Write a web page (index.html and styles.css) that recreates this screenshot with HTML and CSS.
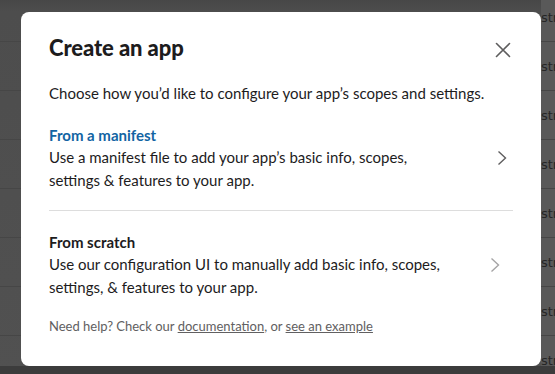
FILE: index.html
```html
<!DOCTYPE html>
<html>
<head>
<meta charset="utf-8">
<link rel="stylesheet" href="styles.css">
</head>
<body>
<div class="page">
  <div class="rows">
    <div class="row"><span class="cell">strings</span></div>
    <div class="row"><span class="cell">strings</span></div>
    <div class="row"><span class="cell">strings</span></div>
    <div class="row"><span class="cell">strings</span></div>
    <div class="row"><span class="cell">strings</span></div>
    <div class="row"><span class="cell">strings</span></div>
    <div class="row"><span class="cell">strings</span></div>
    <div class="row"><span class="cell">strings</span></div>
  </div>
  <div class="bottom"></div>
</div>
<div class="modal">
  <div class="head">
    <h1 class="title">Create an app</h1>
    <button class="close" aria-label="Close">
      <svg width="16" height="16" viewBox="0 0 16 16"><path d="M1.5 1.5L14.5 14.5M14.5 1.5L1.5 14.5" stroke="#5e5d5e" stroke-width="1.6" fill="none" stroke-linecap="round"/></svg>
    </button>
  </div>
  <p class="intro">Choose how you’d like to configure your app’s scopes and settings.</p>
  <div class="option option-first">
    <div class="opt-text">
      <div class="opt-title blue">From a manifest</div>
      <div class="opt-desc">Use a manifest file to add your app’s basic info, scopes,<br>settings &amp; features to your app.</div>
    </div>
    <svg class="chev" width="10" height="16" viewBox="0 0 10 16"><path d="M1.5 1.5L8.5 8L1.5 14.5" stroke="#5e5d5e" stroke-width="1.4" fill="none"/></svg>
  </div>
  <div class="divider"></div>
  <div class="option option-second">
    <div class="opt-text">
      <div class="opt-title">From scratch</div>
      <div class="opt-desc">Use our configuration UI to manually add basic info, scopes,<br>settings, &amp; features to your app.</div>
    </div>
    <svg class="chev chev-light" width="10" height="16" viewBox="0 0 10 16"><path d="M1.5 1.5L8.5 8L1.5 14.5" stroke="#a5a4a5" stroke-width="1.4" fill="none"/></svg>
  </div>
  <p class="help">Need help? Check our <a href="#">documentation</a>, or <a href="#">see an example</a></p>
</div>
</body>
</html>
```
FILE: styles.css
```css
html, body {
  margin: 0;
  padding: 0;
}
body {
  width: 555px;
  height: 374px;
  overflow: hidden;
  background: #4e4e4e;
  font-family: Lato, "Open Sans", sans-serif;
  position: relative;
}
.page {
  height: 374px;
  display: flex;
  flex-direction: column;
  background: linear-gradient(to bottom, #474747 0, #4d4d4d 12px, #515151 100%);
}
.rows {
  flex: 1;
  margin-top: -7px;
  display: flex;
  flex-direction: column;
  overflow: hidden;
}
.row {
  height: 48px;
  flex: none;
  border-bottom: 1px solid #464646;
  display: flex;
  justify-content: flex-end;
  align-items: center;
}
.cell {
  width: 14px;
  height: 48px;
  line-height: 50px;
  overflow: hidden;
  white-space: nowrap;
  background: #595959;
  color: #262626;
  font-family: "DejaVu Sans", sans-serif;
  font-size: 13px;
}
.bottom {
  height: 8px;
  flex: none;
  background: #3c3c3c;
}
.modal {
  position: absolute;
  left: 21px;
  top: 12px;
  width: 520px;
  height: 354px;
  box-sizing: border-box;
  padding: 0 28px;
  background: #fff;
  border-radius: 8px;
  color: #1d1c1d;
  display: flex;
  flex-direction: column;
}
.head {
  display: flex;
  justify-content: space-between;
  align-items: center;
  padding-top: 21px;
}
.title {
  margin: 0;
  font-size: 22px;
  font-weight: 900;
  line-height: 30px;
  letter-spacing: -0.1px;
}
.close {
  border: 0;
  background: none;
  padding: 0;
  margin-right: 2px;
  margin-top: 4px;
  width: 16px;
  height: 16px;
  display: flex;
}
.intro {
  margin: 19px 0 0;
  font-size: 15px;
  line-height: 22px;
}
.option {
  display: flex;
  align-items: center;
  justify-content: space-between;
}
.option-first {
  margin-top: 20px;
}
.option-second {
  margin-top: 20px;
}
.opt-title {
  font-size: 15px;
  font-weight: 700;
  line-height: 22px;
}
.blue {
  color: #1264a3;
}
.opt-desc {
  font-size: 15px;
  line-height: 23px;
}
.chev {
  margin-right: 6px;
}
.chev-light {
  margin-right: 13px;
}
.divider {
  margin-top: 18px;
  height: 1px;
  background: #dddddd;
}
.help {
  margin: 18px 0 0;
  font-size: 13px;
  line-height: 18px;
  color: #616061;
}
.help a {
  color: #616061;
  text-decoration: underline;
}
```
